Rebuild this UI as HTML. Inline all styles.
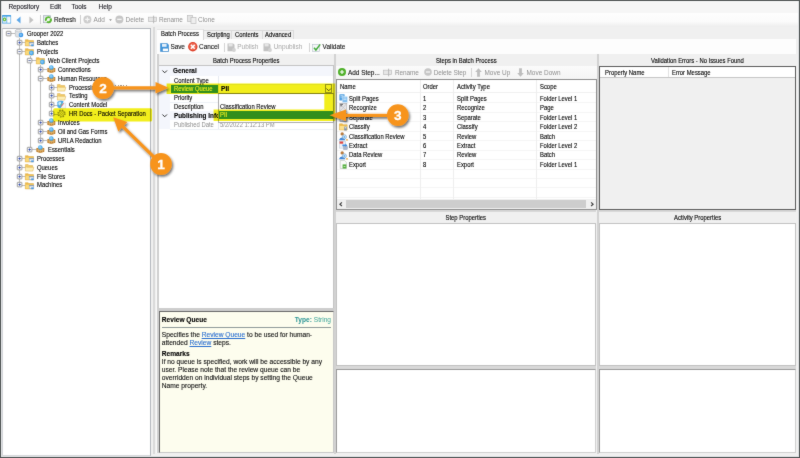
<!DOCTYPE html>
<html><head><meta charset="utf-8"><title>Grooper Design Studio</title>
<style>
html,body{margin:0;padding:0;background:#f0f0f0;}
body{width:800px;height:458px;overflow:hidden;position:relative;font-family:"Liberation Sans",sans-serif;}
#app{filter:url(#soft);position:absolute;left:0;top:0;width:800px;height:458px;overflow:hidden;background:#f0f0f0;}
.b{position:absolute;box-sizing:border-box;}
.t{position:absolute;white-space:nowrap;line-height:10px;font-family:"Liberation Sans",sans-serif;}
.k{-webkit-text-stroke:0.11px currentColor;}
svg{position:absolute;overflow:visible;}
a{color:#2a6fd0;text-decoration:underline;text-decoration-thickness:0.5px;text-underline-offset:0.5px;}
</style></head><body><svg width="0" height="0" style="position:absolute"><defs><filter id="soft" x="0" y="0" width="100%" height="100%" color-interpolation-filters="sRGB"><feConvolveMatrix order="3" kernelMatrix="0.015 0.06 0.015 0.06 0.7 0.06 0.015 0.06 0.015" edgeMode="duplicate" preserveAlpha="true"/></filter></defs></svg><div id="app">

<div class="b" style="left:0px;top:0px;width:800px;height:12.5px;background:#f6f6f6;"></div>
<div class="b" style="left:0px;top:12.5px;width:800px;height:14.5px;background:linear-gradient(#fefefe 0%,#fbfbfb 60%,#ededed 100%);"></div>
<div class="t k" style="left:8.4px;top:1.50px;font-size:6.45px;color:#1a1a22;">Repository</div>
<div class="t k" style="left:50px;top:1.50px;font-size:6.45px;color:#1a1a22;">Edit</div>
<div class="t k" style="left:71.5px;top:1.50px;font-size:6.45px;color:#1a1a22;">Tools</div>
<div class="t k" style="left:98.5px;top:1.50px;font-size:6.45px;color:#1a1a22;">Help</div>
<svg style="left:1.8px;top:14.9px" width="9.1" height="8.6" viewBox="0 0 9.1 8.6"><rect x="0" y="0" width="9.1" height="8.6" rx="0.7" fill="#439fe3"/><rect x="0.6" y="1.6" width="4" height="6.2" fill="#d3e9f9"/><rect x="5.2" y="1.6" width="3.3" height="6.2" fill="#fff"/><circle cx="2.6" cy="4.4" r="1.8" fill="#62ba30"/><path d="M1.6 4.4L3.1 3.3V5.5Z" fill="#eaf6e0"/><path d="M6 2.8H7.6M6 4.2H7.6" stroke="#c9ced4" stroke-width="0.5"/></svg>
<svg style="left:16px;top:15.6px" width="5" height="8" viewBox="0 0 5 8"><path d="M4.5 0.5L0.5 4L4.5 7.5Z" fill="#5aa6e8"/></svg>
<svg style="left:29px;top:15.5px" width="5" height="8" viewBox="0 0 5 8"><path d="M0.4 0.6L4.6 4L0.4 7.4Z" fill="#c2c2c2"/></svg>
<div class="b" style="left:40.2px;top:15px;width:0.8px;height:9px;background:#cfcfcf;"></div>
<svg style="left:43px;top:15px" width="10" height="9" viewBox="0 0 10 9"><rect x="0.4" y="0.7" width="7.2" height="7" fill="#eef1f4" stroke="#a2adb9" stroke-width="0.7"/><path d="M1.4 2.2H4" stroke="#b4bec8" stroke-width="0.6"/><circle cx="5.4" cy="4.7" r="2.5" fill="#f2f8ee" stroke="#5ab832" stroke-width="1.9" stroke-dasharray="6.6 1.25" transform="rotate(-30 5.4 4.7)"/></svg>
<div class="t k" style="left:54px;top:14.60px;font-size:6.45px;color:#151515;letter-spacing:-0.12px;">Refresh</div>
<div class="b" style="left:80.2px;top:15px;width:0.8px;height:9px;background:#cfcfcf;"></div>
<svg style="left:83px;top:15.2px" width="9" height="9" viewBox="0 0 9 9"><circle cx="4.4" cy="4.4" r="4" fill="#cdcdcd"/><path d="M2.2 4.4H6.6M4.4 2.2V6.6" stroke="#f6f6f6" stroke-width="1.2"/></svg>
<div class="t" style="left:93.5px;top:14.60px;font-size:6.45px;color:#8e8e8e;">Add</div>
<svg style="left:108.8px;top:19px" width="3" height="2.4" viewBox="0 0 3 2.4"><path d="M0.1 0.3H2.9L1.5 2Z" fill="#8a8a8a"/></svg>
<svg style="left:115px;top:15.2px" width="9" height="9" viewBox="0 0 9 9"><circle cx="4.4" cy="4.4" r="4" fill="#c6c6c6"/><path d="M2.2 4.4H6.6" stroke="#f6f6f6" stroke-width="1.4"/></svg>
<div class="t" style="left:125.5px;top:14.60px;font-size:6.45px;color:#8e8e8e;">Delete</div>
<svg style="left:148px;top:15px" width="9" height="9" viewBox="0 0 9 9"><rect x="0.5" y="2.2" width="8" height="4.4" fill="#e6e6e6" stroke="#bdbdbd" stroke-width="0.7"/><path d="M5.6 0.7V8.3" stroke="#b2b2b2" stroke-width="0.9"/></svg>
<div class="t" style="left:159px;top:14.60px;font-size:6.45px;color:#8e8e8e;letter-spacing:-0.1px;">Rename</div>
<svg style="left:187px;top:15px" width="10" height="9" viewBox="0 0 10 9"><rect x="0.5" y="0.5" width="5" height="6" fill="#e4e4e4" stroke="#bcbcbc" stroke-width="0.7"/><rect x="4" y="2.5" width="5" height="6" fill="#efefef" stroke="#bcbcbc" stroke-width="0.7"/></svg>
<div class="t" style="left:198px;top:14.60px;font-size:6.45px;color:#8e8e8e;">Clone</div>
<div class="b" style="left:1.8px;top:27.9px;width:149.3px;height:428.8px;background:#fff;border:1px solid #b4b7bd;border-left:1.2px solid #d2d4d8;border-bottom:2.6px solid #d6d8db;"></div>
<div class="b" style="left:153.1px;top:27px;width:1.9px;height:427px;background:#dadada;"></div>
<div class="b" style="left:19.099999999999998px;top:38.2px;width:0.6px;height:146.8px;background:#bdbdbd;"></div>
<div class="b" style="left:29.7px;top:56.0px;width:0.6px;height:93.4px;background:#bdbdbd;"></div>
<div class="b" style="left:40.3px;top:64.9px;width:0.6px;height:75.6px;background:#bdbdbd;"></div>
<div class="b" style="left:50.900000000000006px;top:82.7px;width:0.6px;height:31.10000000000001px;background:#bdbdbd;"></div>
<div class="b" style="left:8.8px;top:33.400000000000006px;width:6.5px;height:0.6px;background:#bdbdbd;"></div>
<svg style="left:6.200000000000001px;top:31.1px" width="5.2" height="5.2" viewBox="0 0 5.2 5.2"><rect x="0.3" y="0.3" width="4.6" height="4.6" rx="0.5" fill="#fcfcfc" stroke="#878787" stroke-width="0.8"/><path d="M1.4 2.6H3.8" stroke="#4a5a94" stroke-width="0.85"/></svg>
<svg style="left:14.700000000000001px;top:29.200000000000003px" width="10" height="10" viewBox="0 0 10 10"><path d="M0.4 1.6C0.4 0 6.4 0 6.4 1.6V6.9C6.4 8.5 0.4 8.5 0.4 6.9Z" fill="#dfe2e5" stroke="#adb2b7" stroke-width="0.55"/><ellipse cx="3.4" cy="1.7" rx="2.9" ry="1" fill="#f3f4f5" stroke="#adb2b7" stroke-width="0.45"/><circle cx="6" cy="6" r="2.3" fill="#3f98e8"/><circle cx="5.7" cy="5.7" r="1.2" fill="#7cc0f4"/></svg>
<div class="t k" style="left:26.6px;top:29.10px;font-size:6.5px;color:#000;transform:scaleX(0.905);transform-origin:left center;">Grooper 2022</div>
<div class="b" style="left:19.4px;top:42.300000000000004px;width:6.5px;height:0.6px;background:#bdbdbd;"></div>
<svg style="left:16.799999999999997px;top:40.0px" width="5.2" height="5.2" viewBox="0 0 5.2 5.2"><rect x="0.3" y="0.3" width="4.6" height="4.6" rx="0.5" fill="#fcfcfc" stroke="#878787" stroke-width="0.8"/><path d="M1.4 2.6H3.8M2.6 1.4V3.8" stroke="#2a46a8" stroke-width="0.85"/></svg>
<svg style="left:25.299999999999997px;top:38.1px" width="10" height="9" viewBox="0 0 10 9"><path d="M0.3 1.7H3.2L4 2.6H8.5V7.9H0.3Z" fill="#efbb4a" stroke="#dba63c" stroke-width="0.5"/><path d="M0.6 3.7H8.2V7.6H0.6Z" fill="#f9d97c"/><rect x="4.2" y="4.3" width="4.6" height="3.2" fill="#eef3f8" stroke="#8fa2b8" stroke-width="0.5"/><rect x="4.2" y="4.3" width="4.6" height="0.9" fill="#7d93ad"/><rect x="6.2" y="6.4" width="2.4" height="1.8" fill="#4a98e4"/></svg>
<div class="t k" style="left:37.2px;top:38.00px;font-size:6.5px;color:#000;transform:scaleX(0.905);transform-origin:left center;">Batches</div>
<div class="b" style="left:19.4px;top:51.2px;width:6.5px;height:0.6px;background:#bdbdbd;"></div>
<svg style="left:16.799999999999997px;top:48.9px" width="5.2" height="5.2" viewBox="0 0 5.2 5.2"><rect x="0.3" y="0.3" width="4.6" height="4.6" rx="0.5" fill="#fcfcfc" stroke="#878787" stroke-width="0.8"/><path d="M1.4 2.6H3.8" stroke="#4a5a94" stroke-width="0.85"/></svg>
<svg style="left:25.299999999999997px;top:47.0px" width="10" height="9" viewBox="0 0 10 9"><path d="M0.3 1.7H3.2L4 2.6H8.5V7.9H0.3Z" fill="#efbb4a" stroke="#dba63c" stroke-width="0.5"/><path d="M0.6 3.7H8.2V7.6H0.6Z" fill="#f9d97c"/><circle cx="6.4" cy="6" r="2.4" fill="#4aa6ea"/><circle cx="6.1" cy="5.7" r="1.3" fill="#7cc4f4"/></svg>
<div class="t k" style="left:37.2px;top:46.90px;font-size:6.5px;color:#000;transform:scaleX(0.905);transform-origin:left center;">Projects</div>
<div class="b" style="left:30.0px;top:60.10000000000001px;width:6.5px;height:0.6px;background:#bdbdbd;"></div>
<svg style="left:27.4px;top:57.800000000000004px" width="5.2" height="5.2" viewBox="0 0 5.2 5.2"><rect x="0.3" y="0.3" width="4.6" height="4.6" rx="0.5" fill="#fcfcfc" stroke="#878787" stroke-width="0.8"/><path d="M1.4 2.6H3.8" stroke="#4a5a94" stroke-width="0.85"/></svg>
<svg style="left:35.9px;top:55.900000000000006px" width="10" height="9" viewBox="0 0 10 9"><path d="M0.3 1.7H3.2L4 2.6H8.5V7.9H0.3Z" fill="#efbb4a" stroke="#dba63c" stroke-width="0.5"/><path d="M0.6 3.7H8.2V7.6H0.6Z" fill="#f9d97c"/><circle cx="6.4" cy="6" r="2.4" fill="#4aa6ea"/><circle cx="6.1" cy="5.7" r="1.3" fill="#7cc4f4"/></svg>
<div class="t k" style="left:47.8px;top:55.80px;font-size:6.5px;color:#000;transform:scaleX(0.905);transform-origin:left center;">Web Client Projects</div>
<div class="b" style="left:40.599999999999994px;top:69.00000000000001px;width:6.5px;height:0.6px;background:#bdbdbd;"></div>
<svg style="left:37.99999999999999px;top:66.70000000000002px" width="5.2" height="5.2" viewBox="0 0 5.2 5.2"><rect x="0.3" y="0.3" width="4.6" height="4.6" rx="0.5" fill="#fcfcfc" stroke="#878787" stroke-width="0.8"/><path d="M1.4 2.6H3.8M2.6 1.4V3.8" stroke="#2a46a8" stroke-width="0.85"/></svg>
<svg style="left:46.49999999999999px;top:64.80000000000001px" width="10" height="9" viewBox="0 0 10 9"><path d="M0.3 3.3L4.3 2.3L8.3 3.3V6.8L4.3 7.9L0.3 6.8Z" fill="#bd7c2c"/><path d="M0.3 4.7L4.3 5.8L8.3 4.7M2.3 3V7.3M6.3 3V7.3M4.3 4.6V7.9" fill="none" stroke="#ecc986" stroke-width="0.55"/><circle cx="4.3" cy="2.5" r="2.3" fill="#4faceb"/><circle cx="4.1" cy="2.2" r="1.3" fill="#8acdf6"/></svg>
<div class="t k" style="left:58.39999999999999px;top:64.70px;font-size:6.5px;color:#000;transform:scaleX(0.905);transform-origin:left center;">Connections</div>
<div class="b" style="left:40.599999999999994px;top:77.9px;width:6.5px;height:0.6px;background:#bdbdbd;"></div>
<svg style="left:37.99999999999999px;top:75.60000000000001px" width="5.2" height="5.2" viewBox="0 0 5.2 5.2"><rect x="0.3" y="0.3" width="4.6" height="4.6" rx="0.5" fill="#fcfcfc" stroke="#878787" stroke-width="0.8"/><path d="M1.4 2.6H3.8" stroke="#4a5a94" stroke-width="0.85"/></svg>
<svg style="left:46.49999999999999px;top:73.7px" width="10" height="9" viewBox="0 0 10 9"><path d="M0.3 3.3L4.3 2.3L8.3 3.3V6.8L4.3 7.9L0.3 6.8Z" fill="#bd7c2c"/><path d="M0.3 4.7L4.3 5.8L8.3 4.7M2.3 3V7.3M6.3 3V7.3M4.3 4.6V7.9" fill="none" stroke="#ecc986" stroke-width="0.55"/><circle cx="4.3" cy="2.5" r="2.3" fill="#4faceb"/><circle cx="4.1" cy="2.2" r="1.3" fill="#8acdf6"/></svg>
<div class="t k" style="left:58.39999999999999px;top:73.60px;font-size:6.5px;color:#000;transform:scaleX(0.905);transform-origin:left center;">Human Resources</div>
<div class="b" style="left:51.2px;top:86.80000000000001px;width:6.5px;height:0.6px;background:#bdbdbd;"></div>
<svg style="left:48.6px;top:84.50000000000001px" width="5.2" height="5.2" viewBox="0 0 5.2 5.2"><rect x="0.3" y="0.3" width="4.6" height="4.6" rx="0.5" fill="#fcfcfc" stroke="#878787" stroke-width="0.8"/><path d="M1.4 2.6H3.8M2.6 1.4V3.8" stroke="#2a46a8" stroke-width="0.85"/></svg>
<svg style="left:57.1px;top:82.60000000000001px" width="10" height="9" viewBox="0 0 10 9"><path d="M0.4 1.6H3.2L4 2.5H7.7V4.4H0.4Z" fill="#f3cd6a" stroke="#d8aa48" stroke-width="0.5"/><path d="M0.4 8.1V3.6H1L1.8 4.3H8.8L7.8 8.1Z" fill="#fdeeb4" stroke="#dcae4c" stroke-width="0.5"/></svg>
<div class="t k" style="left:69.0px;top:82.50px;font-size:6.5px;color:#000;transform:scaleX(0.905);transform-origin:left center;">Processing</div>
<div class="b" style="left:51.2px;top:95.7px;width:6.5px;height:0.6px;background:#bdbdbd;"></div>
<svg style="left:48.6px;top:93.4px" width="5.2" height="5.2" viewBox="0 0 5.2 5.2"><rect x="0.3" y="0.3" width="4.6" height="4.6" rx="0.5" fill="#fcfcfc" stroke="#878787" stroke-width="0.8"/><path d="M1.4 2.6H3.8M2.6 1.4V3.8" stroke="#2a46a8" stroke-width="0.85"/></svg>
<svg style="left:57.1px;top:91.5px" width="10" height="9" viewBox="0 0 10 9"><path d="M0.4 1.6H3.2L4 2.5H7.7V4.4H0.4Z" fill="#f3cd6a" stroke="#d8aa48" stroke-width="0.5"/><path d="M0.4 8.1V3.6H1L1.8 4.3H8.8L7.8 8.1Z" fill="#fdeeb4" stroke="#dcae4c" stroke-width="0.5"/></svg>
<div class="t k" style="left:69.0px;top:91.40px;font-size:6.5px;color:#000;transform:scaleX(0.905);transform-origin:left center;">Testing</div>
<div class="b" style="left:51.2px;top:104.60000000000001px;width:6.5px;height:0.6px;background:#bdbdbd;"></div>
<svg style="left:48.6px;top:102.30000000000001px" width="5.2" height="5.2" viewBox="0 0 5.2 5.2"><rect x="0.3" y="0.3" width="4.6" height="4.6" rx="0.5" fill="#fcfcfc" stroke="#878787" stroke-width="0.8"/><path d="M1.4 2.6H3.8M2.6 1.4V3.8" stroke="#2a46a8" stroke-width="0.85"/></svg>
<svg style="left:57.1px;top:100.4px" width="10" height="10" viewBox="0 0 10 10"><path d="M4 3H8.6V8.2H4Z" fill="#f4f5f7" stroke="#c5cad0" stroke-width="0.4"/><path d="M0.4 2.2C0.4 0.6 5.8 0.2 6.6 1.4L3.6 8.2C1.6 8.4 0.4 7.4 0.4 6Z" fill="#4aa8e8"/><ellipse cx="2.8" cy="3.6" rx="1.5" ry="2" fill="#c4e6fb"/><path d="M4.2 6.6L6.6 3.4" stroke="#d9534f" stroke-width="0.9"/><path d="M3.2 5.4L4.8 3.4" stroke="#5cb85c" stroke-width="0.9"/></svg>
<div class="t k" style="left:69.0px;top:100.30px;font-size:6.5px;color:#000;transform:scaleX(0.905);transform-origin:left center;">Content Model</div>
<div class="b" style="left:51.2px;top:113.50000000000001px;width:6.5px;height:0.6px;background:#bdbdbd;"></div>
<svg style="left:48.6px;top:111.20000000000002px" width="5.2" height="5.2" viewBox="0 0 5.2 5.2"><rect x="0.3" y="0.3" width="4.6" height="4.6" rx="0.5" fill="#fcfcfc" stroke="#878787" stroke-width="0.8"/><path d="M1.4 2.6H3.8M2.6 1.4V3.8" stroke="#2a46a8" stroke-width="0.85"/></svg>
<svg style="left:57.1px;top:109.30000000000001px" width="10" height="10" viewBox="0 0 10 10"><circle cx="4.5" cy="4.6" r="3.5" fill="none" stroke="#8f8f50" stroke-width="1.3" stroke-dasharray="1.45 1.3"/><circle cx="4.5" cy="4.6" r="2.7" fill="#fbfbf2" stroke="#8a8a4a" stroke-width="0.7"/><circle cx="4.5" cy="4.6" r="1" fill="none" stroke="#8a8a4a" stroke-width="0.6"/></svg>
<div class="t k" style="left:69.0px;top:109.20px;font-size:6.5px;color:#000;transform:scaleX(0.905);transform-origin:left center;">HR Docs - Packet Separation</div>
<div class="b" style="left:40.599999999999994px;top:122.4px;width:6.5px;height:0.6px;background:#bdbdbd;"></div>
<svg style="left:37.99999999999999px;top:120.10000000000001px" width="5.2" height="5.2" viewBox="0 0 5.2 5.2"><rect x="0.3" y="0.3" width="4.6" height="4.6" rx="0.5" fill="#fcfcfc" stroke="#878787" stroke-width="0.8"/><path d="M1.4 2.6H3.8M2.6 1.4V3.8" stroke="#2a46a8" stroke-width="0.85"/></svg>
<svg style="left:46.49999999999999px;top:118.2px" width="10" height="9" viewBox="0 0 10 9"><path d="M0.3 3.3L4.3 2.3L8.3 3.3V6.8L4.3 7.9L0.3 6.8Z" fill="#bd7c2c"/><path d="M0.3 4.7L4.3 5.8L8.3 4.7M2.3 3V7.3M6.3 3V7.3M4.3 4.6V7.9" fill="none" stroke="#ecc986" stroke-width="0.55"/><circle cx="4.3" cy="2.5" r="2.3" fill="#4faceb"/><circle cx="4.1" cy="2.2" r="1.3" fill="#8acdf6"/></svg>
<div class="t k" style="left:58.39999999999999px;top:118.10px;font-size:6.5px;color:#000;transform:scaleX(0.905);transform-origin:left center;">Invoices</div>
<div class="b" style="left:40.599999999999994px;top:131.3px;width:6.5px;height:0.6px;background:#bdbdbd;"></div>
<svg style="left:37.99999999999999px;top:129.00000000000003px" width="5.2" height="5.2" viewBox="0 0 5.2 5.2"><rect x="0.3" y="0.3" width="4.6" height="4.6" rx="0.5" fill="#fcfcfc" stroke="#878787" stroke-width="0.8"/><path d="M1.4 2.6H3.8M2.6 1.4V3.8" stroke="#2a46a8" stroke-width="0.85"/></svg>
<svg style="left:46.49999999999999px;top:127.10000000000002px" width="10" height="9" viewBox="0 0 10 9"><path d="M0.3 3.3L4.3 2.3L8.3 3.3V6.8L4.3 7.9L0.3 6.8Z" fill="#bd7c2c"/><path d="M0.3 4.7L4.3 5.8L8.3 4.7M2.3 3V7.3M6.3 3V7.3M4.3 4.6V7.9" fill="none" stroke="#ecc986" stroke-width="0.55"/><circle cx="4.3" cy="2.5" r="2.3" fill="#4faceb"/><circle cx="4.1" cy="2.2" r="1.3" fill="#8acdf6"/></svg>
<div class="t k" style="left:58.39999999999999px;top:127.00px;font-size:6.5px;color:#000;transform:scaleX(0.905);transform-origin:left center;">Oil and Gas Forms</div>
<div class="b" style="left:40.599999999999994px;top:140.2px;width:6.5px;height:0.6px;background:#bdbdbd;"></div>
<svg style="left:37.99999999999999px;top:137.9px" width="5.2" height="5.2" viewBox="0 0 5.2 5.2"><rect x="0.3" y="0.3" width="4.6" height="4.6" rx="0.5" fill="#fcfcfc" stroke="#878787" stroke-width="0.8"/><path d="M1.4 2.6H3.8M2.6 1.4V3.8" stroke="#2a46a8" stroke-width="0.85"/></svg>
<svg style="left:46.49999999999999px;top:136.0px" width="10" height="9" viewBox="0 0 10 9"><path d="M0.3 3.3L4.3 2.3L8.3 3.3V6.8L4.3 7.9L0.3 6.8Z" fill="#bd7c2c"/><path d="M0.3 4.7L4.3 5.8L8.3 4.7M2.3 3V7.3M6.3 3V7.3M4.3 4.6V7.9" fill="none" stroke="#ecc986" stroke-width="0.55"/><circle cx="4.3" cy="2.5" r="2.3" fill="#4faceb"/><circle cx="4.1" cy="2.2" r="1.3" fill="#8acdf6"/></svg>
<div class="t k" style="left:58.39999999999999px;top:135.90px;font-size:6.5px;color:#000;transform:scaleX(0.905);transform-origin:left center;">URLA Redaction</div>
<div class="b" style="left:30.0px;top:149.1px;width:6.5px;height:0.6px;background:#bdbdbd;"></div>
<svg style="left:27.4px;top:146.8px" width="5.2" height="5.2" viewBox="0 0 5.2 5.2"><rect x="0.3" y="0.3" width="4.6" height="4.6" rx="0.5" fill="#fcfcfc" stroke="#878787" stroke-width="0.8"/><path d="M1.4 2.6H3.8M2.6 1.4V3.8" stroke="#2a46a8" stroke-width="0.85"/></svg>
<svg style="left:35.9px;top:144.9px" width="10" height="9" viewBox="0 0 10 9"><path d="M0.3 3.3L4.3 2.3L8.3 3.3V6.8L4.3 7.9L0.3 6.8Z" fill="#bd7c2c"/><path d="M0.3 4.7L4.3 5.8L8.3 4.7M2.3 3V7.3M6.3 3V7.3M4.3 4.6V7.9" fill="none" stroke="#ecc986" stroke-width="0.55"/><circle cx="4.3" cy="2.5" r="2.3" fill="#4faceb"/><circle cx="4.1" cy="2.2" r="1.3" fill="#8acdf6"/></svg>
<div class="t k" style="left:47.8px;top:144.80px;font-size:6.5px;color:#000;transform:scaleX(0.905);transform-origin:left center;">Essentials</div>
<div class="b" style="left:19.4px;top:158.0px;width:6.5px;height:0.6px;background:#bdbdbd;"></div>
<svg style="left:16.799999999999997px;top:155.70000000000002px" width="5.2" height="5.2" viewBox="0 0 5.2 5.2"><rect x="0.3" y="0.3" width="4.6" height="4.6" rx="0.5" fill="#fcfcfc" stroke="#878787" stroke-width="0.8"/><path d="M1.4 2.6H3.8M2.6 1.4V3.8" stroke="#2a46a8" stroke-width="0.85"/></svg>
<svg style="left:25.299999999999997px;top:153.8px" width="10" height="9" viewBox="0 0 10 9"><path d="M0.3 1.7H3.2L4 2.6H8.5V7.9H0.3Z" fill="#efbb4a" stroke="#dba63c" stroke-width="0.5"/><path d="M0.6 3.7H8.2V7.6H0.6Z" fill="#f9d97c"/><rect x="4.2" y="4.3" width="4.6" height="3.2" fill="#eef3f8" stroke="#8fa2b8" stroke-width="0.5"/><rect x="4.2" y="4.3" width="4.6" height="0.9" fill="#7d93ad"/><rect x="6.2" y="6.4" width="2.4" height="1.8" fill="#4a98e4"/></svg>
<div class="t k" style="left:37.2px;top:153.70px;font-size:6.5px;color:#000;transform:scaleX(0.905);transform-origin:left center;">Processes</div>
<div class="b" style="left:19.4px;top:166.89999999999998px;width:6.5px;height:0.6px;background:#bdbdbd;"></div>
<svg style="left:16.799999999999997px;top:164.6px" width="5.2" height="5.2" viewBox="0 0 5.2 5.2"><rect x="0.3" y="0.3" width="4.6" height="4.6" rx="0.5" fill="#fcfcfc" stroke="#878787" stroke-width="0.8"/><path d="M1.4 2.6H3.8M2.6 1.4V3.8" stroke="#2a46a8" stroke-width="0.85"/></svg>
<svg style="left:25.299999999999997px;top:162.7px" width="10" height="9" viewBox="0 0 10 9"><path d="M0.4 1.6H3.2L4 2.5H7.7V4.4H0.4Z" fill="#f3cd6a" stroke="#d8aa48" stroke-width="0.5"/><path d="M0.4 8.1V3.6H1L1.8 4.3H8.8L7.8 8.1Z" fill="#fdeeb4" stroke="#dcae4c" stroke-width="0.5"/></svg>
<div class="t k" style="left:37.2px;top:162.60px;font-size:6.5px;color:#000;transform:scaleX(0.905);transform-origin:left center;">Queues</div>
<div class="b" style="left:19.4px;top:175.8px;width:6.5px;height:0.6px;background:#bdbdbd;"></div>
<svg style="left:16.799999999999997px;top:173.50000000000003px" width="5.2" height="5.2" viewBox="0 0 5.2 5.2"><rect x="0.3" y="0.3" width="4.6" height="4.6" rx="0.5" fill="#fcfcfc" stroke="#878787" stroke-width="0.8"/><path d="M1.4 2.6H3.8M2.6 1.4V3.8" stroke="#2a46a8" stroke-width="0.85"/></svg>
<svg style="left:25.299999999999997px;top:171.60000000000002px" width="10" height="9" viewBox="0 0 10 9"><path d="M0.3 1.7H3.2L4 2.6H8.5V7.9H0.3Z" fill="#efbb4a" stroke="#dba63c" stroke-width="0.5"/><path d="M0.6 3.7H8.2V7.6H0.6Z" fill="#f9d97c"/><rect x="4.2" y="4.3" width="4.6" height="3.2" fill="#eef3f8" stroke="#8fa2b8" stroke-width="0.5"/><rect x="4.2" y="4.3" width="4.6" height="0.9" fill="#7d93ad"/><rect x="6.2" y="6.4" width="2.4" height="1.8" fill="#4a98e4"/></svg>
<div class="t k" style="left:37.2px;top:171.50px;font-size:6.5px;color:#000;transform:scaleX(0.905);transform-origin:left center;">File Stores</div>
<div class="b" style="left:19.4px;top:184.7px;width:6.5px;height:0.6px;background:#bdbdbd;"></div>
<svg style="left:16.799999999999997px;top:182.4px" width="5.2" height="5.2" viewBox="0 0 5.2 5.2"><rect x="0.3" y="0.3" width="4.6" height="4.6" rx="0.5" fill="#fcfcfc" stroke="#878787" stroke-width="0.8"/><path d="M1.4 2.6H3.8M2.6 1.4V3.8" stroke="#2a46a8" stroke-width="0.85"/></svg>
<svg style="left:25.299999999999997px;top:180.5px" width="10" height="9" viewBox="0 0 10 9"><path d="M0.3 1.7H3.2L4 2.6H8.5V7.9H0.3Z" fill="#efbb4a" stroke="#dba63c" stroke-width="0.5"/><path d="M0.6 3.7H8.2V7.6H0.6Z" fill="#f9d97c"/><rect x="4.2" y="4.3" width="4.6" height="3.2" fill="#eef3f8" stroke="#8fa2b8" stroke-width="0.5"/><rect x="4.2" y="4.3" width="4.6" height="0.9" fill="#7d93ad"/><rect x="6.2" y="6.4" width="2.4" height="1.8" fill="#4a98e4"/></svg>
<div class="t k" style="left:37.2px;top:180.40px;font-size:6.5px;color:#000;transform:scaleX(0.905);transform-origin:left center;">Machines</div>
<div class="b" style="left:156.8px;top:39.3px;width:639px;height:15px;background:#fdfdfd;"></div>
<div class="b" style="left:156.8px;top:28.8px;width:47.2px;height:11.5px;background:#fdfdfd;border:1px solid #e4e4e4;border-bottom:none;border-left:none;border-right-color:#d8d8d8;"></div>
<div class="t k" style="left:161.3px;top:29.20px;font-size:6.5px;color:#000;transform:scaleX(0.905);transform-origin:left center;">Batch Process</div>
<div class="b" style="left:204.0px;top:30.2px;width:28.0px;height:9.3px;background:#f0f0f0;border:1px solid #dadada;border-left:none;border-bottom:none;"></div>
<div class="t k" style="left:206.5px;top:29.80px;font-size:6.5px;color:#000;transform:scaleX(0.905);transform-origin:left center;">Scripting</div>
<div class="b" style="left:232.0px;top:30.2px;width:30.5px;height:9.3px;background:#f0f0f0;border:1px solid #dadada;border-left:none;border-bottom:none;"></div>
<div class="t k" style="left:235.3px;top:29.80px;font-size:6.5px;color:#000;transform:scaleX(0.905);transform-origin:left center;">Contents</div>
<div class="b" style="left:262.5px;top:30.2px;width:31.600000000000023px;height:9.3px;background:#f0f0f0;border:1px solid #dadada;border-left:none;border-bottom:none;"></div>
<div class="t k" style="left:265.2px;top:29.80px;font-size:6.5px;color:#000;transform:scaleX(0.905);transform-origin:left center;">Advanced</div>
<svg style="left:160px;top:42.7px" width="9" height="9" viewBox="0 0 9 9"><path d="M0.5 0.5H7.2L8.5 1.8V8.5H0.5Z" fill="#3f95dc" stroke="#2f7fc6" stroke-width="0.5"/><rect x="2" y="0.9" width="4.6" height="2.9" fill="#e4effa"/><rect x="2.6" y="5.2" width="5.6" height="3.1" fill="#fff" stroke="#2f7fc6" stroke-width="0.4"/></svg>
<div class="t k" style="left:170.6px;top:42.20px;font-size:6.45px;color:#151515;letter-spacing:-0.15px;">Save</div>
<svg style="left:187.8px;top:42.3px" width="9.6" height="9.6" viewBox="0 0 9.6 9.6"><circle cx="4.8" cy="4.8" r="4.7" fill="#de3f28"/><circle cx="4.8" cy="4.6" r="3.6" fill="#ec6650"/><path d="M2.9 2.9L6.7 6.7M6.7 2.9L2.9 6.7" stroke="#fff" stroke-width="1.5"/></svg>
<div class="t k" style="left:199px;top:42.20px;font-size:6.45px;color:#151515;">Cancel</div>
<div class="b" style="left:224.3px;top:42.6px;width:0.8px;height:9px;background:#d4d4d4;"></div>
<svg style="left:226.5px;top:42.7px" width="9" height="9" viewBox="0 0 9 9"><path d="M0.5 0.5H6.2L7.5 1.8V8.3H0.5Z" fill="#c2c2c2"/><rect x="1.6" y="0.9" width="4" height="2.5" fill="#e6e6e6"/><circle cx="7" cy="7" r="1.9" fill="#d2d2d2"/></svg>
<div class="t" style="left:237.3px;top:42.20px;font-size:6.45px;color:#a6a6a6;">Publish</div>
<svg style="left:263.3px;top:42.7px" width="9" height="9" viewBox="0 0 9 9"><path d="M0.5 0.5H6.2L7.5 1.8V8.3H0.5Z" fill="#c2c2c2"/><rect x="1.6" y="0.9" width="4" height="2.5" fill="#e6e6e6"/><circle cx="7" cy="7" r="1.9" fill="#d2d2d2"/></svg>
<div class="t" style="left:273.7px;top:42.20px;font-size:6.45px;color:#a6a6a6;">Unpublish</div>
<div class="b" style="left:308.6px;top:42.6px;width:0.8px;height:9px;background:#d4d4d4;"></div>
<svg style="left:312px;top:42.7px" width="10" height="9" viewBox="0 0 10 9"><rect x="0.5" y="1.6" width="6.8" height="6.8" fill="#f4f6f8" stroke="#b4bec8" stroke-width="0.6"/><path d="M2 4.8L3.9 7L8.2 1.4" fill="none" stroke="#45ab3c" stroke-width="1.5"/></svg>
<div class="t k" style="left:322.6px;top:42.20px;font-size:6.45px;color:#151515;">Validate</div>
<div class="b" style="left:333.8px;top:54px;width:2.1px;height:400px;background:#d2d2d2;"></div>
<div class="b" style="left:596.6px;top:54px;width:2.1px;height:400px;background:#d2d2d2;"></div>
<div class="b" style="left:157.4px;top:54.1px;width:1.9px;height:399px;background:#d0d0d0;"></div>
<div class="b" style="left:156.4px;top:54.1px;width:1px;height:399px;background:#fafafa;"></div>
<div class="t k" style="left:159.3px;top:55.80px;font-size:6.5px;color:#000;width:174.5px;text-align:center;transform:scaleX(0.905);transform-origin:center center;">Batch Process Properties</div>
<div class="b" style="left:159.3px;top:65.4px;width:174.5px;height:242.6px;background:#fff;border:0.7px solid #c4c4c4;border-left:none;border-bottom:none;"></div>
<div class="b" style="left:159.3px;top:66.1px;width:173.8px;height:9.550000000000011px;background:#f4f6fc;"></div>
<div class="b" style="left:159.3px;top:111.25px;width:173.8px;height:8.9px;background:#f4f6fc;"></div>
<div class="b" style="left:159.3px;top:75.65px;width:11px;height:35.6px;background:#f4f6fc;"></div>
<div class="b" style="left:159.3px;top:120.15px;width:11px;height:8.9px;background:#f4f6fc;"></div>
<div class="b" style="left:170.3px;top:84.25000000000001px;width:162.8px;height:0.6px;background:#eef1f7;"></div>
<div class="b" style="left:170.3px;top:93.15px;width:162.8px;height:0.6px;background:#eef1f7;"></div>
<div class="b" style="left:170.3px;top:102.05000000000001px;width:162.8px;height:0.6px;background:#eef1f7;"></div>
<div class="b" style="left:170.3px;top:128.75px;width:162.8px;height:0.6px;background:#eef1f7;"></div>
<div class="b" style="left:217.5px;top:75.65px;width:0.6px;height:35.6px;background:#e6eaf2;"></div>
<div class="b" style="left:217.5px;top:120.15px;width:0.6px;height:8.9px;background:#e6eaf2;"></div>
<svg style="left:162.4px;top:69.7px" width="5.4" height="3.4" viewBox="0 0 5.4 3.4"><path d="M0.4 0.5L2.7 2.8L5 0.5" fill="none" stroke="#2c2c2c" stroke-width="1.0"/></svg>
<svg style="left:162.4px;top:114.2px" width="5.4" height="3.4" viewBox="0 0 5.4 3.4"><path d="M0.4 0.5L2.7 2.8L5 0.5" fill="none" stroke="#2c2c2c" stroke-width="1.0"/></svg>
<div class="t k" style="left:173.4px;top:66.20px;font-size:6.7px;color:#000;font-weight:bold;transform:scaleX(0.95);transform-origin:left center;">General</div>
<div class="t k" style="left:173.5px;top:75.50px;font-size:6.5px;color:#000;transform:scaleX(0.905);transform-origin:left center;">Content Type</div>
<div class="b" style="left:170.9px;top:84.9px;width:47px;height:7.8px;background:#3399ff;"></div>
<div class="t k" style="left:173.8px;top:84.40px;font-size:6.5px;color:#fff;transform:scaleX(0.905);transform-origin:left center;">Review Queue</div>
<div class="t k" style="left:173.6px;top:93.30px;font-size:6.5px;color:#000;transform:scaleX(0.905);transform-origin:left center;">Priority</div>
<div class="t k" style="left:173.6px;top:102.20px;font-size:6.5px;color:#000;transform:scaleX(0.905);transform-origin:left center;">Description</div>
<div class="t k" style="left:174px;top:110.70px;font-size:6.7px;color:#000;font-weight:bold;transform:scaleX(0.95);transform-origin:left center;">Publishing Info</div>
<div class="t" style="left:173.6px;top:120.00px;font-size:6.5px;color:#8a8a8a;transform:scaleX(0.905);transform-origin:left center;">Published Date</div>
<div class="t" style="left:220px;top:120.30px;font-size:6.5px;color:#8e8e8e;transform:scaleX(0.905);transform-origin:left center;">5/2/2022 1:12:13 PM</div>
<div class="t k" style="left:221px;top:83.70px;font-size:6.6px;color:#000;font-weight:bold;">PII</div>
<div class="b" style="left:324.8px;top:84.3px;width:7.7px;height:8.5px;background:#fff;border:0.6px solid #9c9c9c;"></div>
<svg style="left:326px;top:88.1px" width="5.4" height="3.4" viewBox="0 0 5.4 3.4"><path d="M0.4 0.5L2.7 2.8L5 0.5" fill="none" stroke="#444" stroke-width="0.9"/></svg>
<div class="b" style="left:218px;top:93.2px;width:115.8px;height:30.2px;background:#fff;border:0.7px solid #acacac;border-top-color:#8a8a8a;border-right-color:#9a9a9a;"></div>
<div class="t k" style="left:219.5px;top:102.00px;font-size:6.5px;color:#000;transform:scaleX(0.905);transform-origin:left center;">Classification Review</div>
<div class="b" style="left:218.6px;top:110.7px;width:114.6px;height:8.4px;background:#3399ff;"></div>
<div class="t k" style="left:220px;top:110.30px;font-size:6.5px;color:#fff;transform:scaleX(0.905);transform-origin:left center;">PII</div>
<div class="b" style="left:159.3px;top:308px;width:174.5px;height:3.2px;background:#cdcdcd;"></div>
<div class="b" style="left:159px;top:311.1px;width:174.6px;height:141.6px;background:#fdfdee;border:0.8px solid #6a6a6a;border-right-color:#c8c8c8;border-bottom-color:#c8c8c8;"></div>
<div class="t k" style="left:161.8px;top:314.90px;font-size:6.6px;color:#000;font-weight:bold;">Review Queue</div>
<div class="t" style="left:231px;top:314.9px;width:100px;text-align:right;font-size:6.6px;"><b style="color:#2a9494">Type:</b> <span style="color:#3aa398">String</span></div>
<div class="b" style="left:161.5px;top:327.1px;width:169.8px;height:0.7px;background:#8f9a9a;"></div>
<div class="t k" style="left:161.8px;top:330.10px;font-size:6.65px;color:#111;">Specifies the <a>Review Queue</a> to be used for human-</div>
<div class="t k" style="left:161.8px;top:338.00px;font-size:6.65px;color:#111;">attended <a>Review</a> steps.</div>
<div class="t k" style="left:161.8px;top:348.50px;font-size:6.6px;color:#000;font-weight:bold;">Remarks</div>
<div class="t k" style="left:161.8px;top:357.40px;font-size:6.65px;color:#111;">If no queue is specified, work will be accessible by any</div>
<div class="t k" style="left:161.8px;top:365.18px;font-size:6.65px;color:#111;">user. Please note that the review queue can be</div>
<div class="t k" style="left:161.8px;top:372.96px;font-size:6.65px;color:#111;">overridden on individual steps by setting the Queue</div>
<div class="t k" style="left:161.8px;top:380.74px;font-size:6.65px;color:#111;">Name property.</div>
<div class="t k" style="left:336px;top:55.80px;font-size:6.5px;color:#000;width:260.6px;text-align:center;transform:scaleX(0.905);transform-origin:center center;">Steps in Batch Process</div>
<div class="b" style="left:336px;top:65.7px;width:260.6px;height:13.6px;background:linear-gradient(#fbfbfb,#f4f4f4);"></div>
<svg style="left:337.6px;top:68.1px" width="8" height="8" viewBox="0 0 8 8"><circle cx="4" cy="4" r="4" fill="#4fb02a"/><path d="M1.9 4H6.1M4 1.9V6.1" stroke="#fff" stroke-width="1.15"/></svg>
<div class="t k" style="left:347.9px;top:67.50px;font-size:6.45px;color:#151515;">Add Step...</div>
<svg style="left:383.4px;top:68px" width="9" height="9" viewBox="0 0 9 9"><rect x="0.5" y="2.2" width="8" height="4.4" fill="#e6e6e6" stroke="#bdbdbd" stroke-width="0.7"/><path d="M5.6 0.7V8.3" stroke="#b2b2b2" stroke-width="0.9"/></svg>
<div class="t" style="left:395px;top:67.50px;font-size:6.45px;color:#8e8e8e;letter-spacing:-0.1px;">Rename</div>
<svg style="left:423.5px;top:68.3px" width="8" height="8" viewBox="0 0 8 8"><circle cx="4" cy="4" r="3.8" fill="#c6c6c6"/><path d="M2 4H6" stroke="#f6f6f6" stroke-width="1.3"/></svg>
<div class="t" style="left:433.7px;top:67.50px;font-size:6.45px;color:#8e8e8e;letter-spacing:-0.1px;">Delete Step</div>
<div class="b" style="left:471px;top:68px;width:0.8px;height:9px;background:#d4d4d4;"></div>
<svg style="left:474.5px;top:68px" width="7" height="9" viewBox="0 0 7 9"><path d="M3.5 0.3L6.8 4H4.9V8.7H2.1V4H0.2Z" fill="#bdbdbd"/></svg>
<div class="t" style="left:484.5px;top:67.50px;font-size:6.45px;color:#8e8e8e;">Move Up</div>
<svg style="left:516.5px;top:68px" width="7" height="9" viewBox="0 0 7 9"><path d="M3.5 8.7L6.8 5H4.9V0.3H2.1V5H0.2Z" fill="#bdbdbd"/></svg>
<div class="t" style="left:526.5px;top:67.50px;font-size:6.45px;color:#8e8e8e;">Move Down</div>
<div class="b" style="left:336px;top:79.3px;width:260.5px;height:130.3px;background:#fff;border:0.8px solid #8e8e8e;"></div>
<div class="b" style="left:336.8px;top:91.9px;width:258.9px;height:0.6px;background:#f0f0f0;"></div>
<div class="b" style="left:336.8px;top:102.4px;width:258.9px;height:0.6px;background:#f5f5f5;"></div>
<div class="b" style="left:336.8px;top:111.85000000000001px;width:258.9px;height:0.6px;background:#f5f5f5;"></div>
<div class="b" style="left:336.8px;top:121.30000000000001px;width:258.9px;height:0.6px;background:#f5f5f5;"></div>
<div class="b" style="left:336.8px;top:130.75px;width:258.9px;height:0.6px;background:#f5f5f5;"></div>
<div class="b" style="left:336.8px;top:140.2px;width:258.9px;height:0.6px;background:#f5f5f5;"></div>
<div class="b" style="left:336.8px;top:149.65px;width:258.9px;height:0.6px;background:#f5f5f5;"></div>
<div class="b" style="left:336.8px;top:159.1px;width:258.9px;height:0.6px;background:#f5f5f5;"></div>
<div class="b" style="left:336.8px;top:168.55px;width:258.9px;height:0.6px;background:#f5f5f5;"></div>
<div class="b" style="left:336.8px;top:178.0px;width:258.9px;height:0.6px;background:#f5f5f5;"></div>
<div class="b" style="left:336.8px;top:187.45px;width:258.9px;height:0.6px;background:#f5f5f5;"></div>
<div class="b" style="left:336.8px;top:196.9px;width:258.9px;height:0.6px;background:#f5f5f5;"></div>
<div class="b" style="left:420.2px;top:80.1px;width:0.6px;height:119px;background:#eeeeee;"></div>
<div class="b" style="left:453.3px;top:80.1px;width:0.6px;height:119px;background:#eeeeee;"></div>
<div class="b" style="left:536.4px;top:80.1px;width:0.6px;height:119px;background:#eeeeee;"></div>
<div class="t k" style="left:340.2px;top:81.80px;font-size:6.5px;color:#000;transform:scaleX(0.905);transform-origin:left center;">Name</div>
<div class="t k" style="left:423.3px;top:81.80px;font-size:6.5px;color:#000;transform:scaleX(0.905);transform-origin:left center;">Order</div>
<div class="t k" style="left:456.5px;top:81.80px;font-size:6.5px;color:#000;transform:scaleX(0.905);transform-origin:left center;">Activity Type</div>
<div class="t k" style="left:540px;top:81.80px;font-size:6.5px;color:#000;transform:scaleX(0.905);transform-origin:left center;">Scope</div>
<svg style="left:339.3px;top:93.8px" width="9" height="9" viewBox="0 0 9 9"><rect x="0.4" y="0.3" width="5.2" height="6.2" rx="0.5" fill="#4f9fe0"/><path d="M1.4 1.6H4.4M1.4 3H4.4" stroke="#cfe6fa" stroke-width="0.7"/><rect x="3.3" y="2.4" width="5.2" height="6.2" rx="0.5" fill="#7fbdee" stroke="#e8f3fc" stroke-width="0.5"/><path d="M4.4 4H7.4M4.4 5.6H7.4" stroke="#e4f1fc" stroke-width="0.7"/></svg>
<div class="t k" style="left:349px;top:93.70px;font-size:6.5px;color:#000;transform:scaleX(0.905);transform-origin:left center;">Split Pages</div>
<div class="t k" style="left:423.3px;top:93.70px;font-size:6.5px;color:#000;transform:scaleX(0.905);transform-origin:left center;">1</div>
<div class="t k" style="left:456.5px;top:93.70px;font-size:6.5px;color:#000;transform:scaleX(0.905);transform-origin:left center;">Split Pages</div>
<div class="t k" style="left:540px;top:93.70px;font-size:6.5px;color:#000;transform:scaleX(0.905);transform-origin:left center;">Folder Level 1</div>
<svg style="left:339.3px;top:103.25999999999999px" width="9" height="9" viewBox="0 0 9 9"><rect x="0.8" y="0.4" width="7" height="8" fill="#e6e6e8" stroke="#a4a4a8" stroke-width="0.6"/><path d="M0.8 0.4L7.8 8.4M7.8 0.4L0.8 8.4" stroke="#bcbcc0" stroke-width="0.6"/><path d="M1.2 1.4H4M1.2 2.8H3" stroke="#4a4a4e" stroke-width="0.8"/></svg>
<div class="t k" style="left:349px;top:103.16px;font-size:6.5px;color:#000;transform:scaleX(0.905);transform-origin:left center;">Recognize</div>
<div class="t k" style="left:423.3px;top:103.16px;font-size:6.5px;color:#000;transform:scaleX(0.905);transform-origin:left center;">2</div>
<div class="t k" style="left:456.5px;top:103.16px;font-size:6.5px;color:#000;transform:scaleX(0.905);transform-origin:left center;">Recognize</div>
<div class="t k" style="left:540px;top:103.16px;font-size:6.5px;color:#000;transform:scaleX(0.905);transform-origin:left center;">Page</div>
<svg style="left:339.3px;top:112.72px" width="9" height="9" viewBox="0 0 9 9"><rect x="1" y="0.5" width="7" height="8" fill="#eef2f6" stroke="#8e9aa8" stroke-width="0.7"/><path d="M0 4.5H9" stroke="#e08a2a" stroke-width="0.9"/></svg>
<div class="t k" style="left:349px;top:112.62px;font-size:6.5px;color:#000;transform:scaleX(0.905);transform-origin:left center;">Separate</div>
<div class="t k" style="left:423.3px;top:112.62px;font-size:6.5px;color:#000;transform:scaleX(0.905);transform-origin:left center;">3</div>
<div class="t k" style="left:456.5px;top:112.62px;font-size:6.5px;color:#000;transform:scaleX(0.905);transform-origin:left center;">Separate</div>
<div class="t k" style="left:540px;top:112.62px;font-size:6.5px;color:#000;transform:scaleX(0.905);transform-origin:left center;">Folder Level 1</div>
<svg style="left:339.3px;top:122.18px" width="9" height="9" viewBox="0 0 9 9"><path d="M0.4 1.8H3.4L4.2 2.7H8.2V8H0.4Z" fill="#efbb4a" stroke="#dba63c" stroke-width="0.5"/><path d="M0.7 3.9H7.9V7.7H0.7Z" fill="#fbe08e"/><rect x="5.2" y="4.6" width="2.6" height="3.9" fill="#7d8ea4"/><rect x="5.7" y="5.2" width="1.6" height="1.2" fill="#dfe6ee"/></svg>
<div class="t k" style="left:349px;top:122.08px;font-size:6.5px;color:#000;transform:scaleX(0.905);transform-origin:left center;">Classify</div>
<div class="t k" style="left:423.3px;top:122.08px;font-size:6.5px;color:#000;transform:scaleX(0.905);transform-origin:left center;">4</div>
<div class="t k" style="left:456.5px;top:122.08px;font-size:6.5px;color:#000;transform:scaleX(0.905);transform-origin:left center;">Classify</div>
<div class="t k" style="left:540px;top:122.08px;font-size:6.5px;color:#000;transform:scaleX(0.905);transform-origin:left center;">Folder Level 2</div>
<svg style="left:339.3px;top:131.64px" width="9" height="9" viewBox="0 0 9 9"><circle cx="3.2" cy="1.9" r="1.7" fill="#b87a3c"/><path d="M0.2 8.3C0.2 4.4 6.2 4.4 6.2 8.3Z" fill="#3f86d8"/><circle cx="5.4" cy="4.9" r="2.1" fill="#d8ecfb" stroke="#7da2c4" stroke-width="0.7"/><circle cx="5.4" cy="4.9" r="1" fill="#6db6ee"/><circle cx="8" cy="7.8" r="0.9" fill="#eea236"/></svg>
<div class="t k" style="left:349px;top:131.54px;font-size:6.5px;color:#000;transform:scaleX(0.905);transform-origin:left center;">Classification Review</div>
<div class="t k" style="left:423.3px;top:131.54px;font-size:6.5px;color:#000;transform:scaleX(0.905);transform-origin:left center;">5</div>
<div class="t k" style="left:456.5px;top:131.54px;font-size:6.5px;color:#000;transform:scaleX(0.905);transform-origin:left center;">Review</div>
<div class="t k" style="left:540px;top:131.54px;font-size:6.5px;color:#000;transform:scaleX(0.905);transform-origin:left center;">Batch</div>
<svg style="left:339.3px;top:141.1px" width="9" height="9" viewBox="0 0 9 9"><rect x="0.6" y="0.5" width="6" height="6.6" fill="#eef2f8" stroke="#b4c2d2" stroke-width="0.5"/><rect x="0.6" y="0.5" width="3.6" height="2.2" fill="#e0463e"/><path d="M3.4 3.6H6.4V2.4L8.4 4.4L6.4 6.4V5.2H3.4Z" fill="#3f8ee0"/><rect x="4.6" y="5.6" width="3.8" height="3" fill="#a9b6cc" stroke="#8a98b0" stroke-width="0.4"/></svg>
<div class="t k" style="left:349px;top:141.00px;font-size:6.5px;color:#000;transform:scaleX(0.905);transform-origin:left center;">Extract</div>
<div class="t k" style="left:423.3px;top:141.00px;font-size:6.5px;color:#000;transform:scaleX(0.905);transform-origin:left center;">6</div>
<div class="t k" style="left:456.5px;top:141.00px;font-size:6.5px;color:#000;transform:scaleX(0.905);transform-origin:left center;">Extract</div>
<div class="t k" style="left:540px;top:141.00px;font-size:6.5px;color:#000;transform:scaleX(0.905);transform-origin:left center;">Folder Level 2</div>
<svg style="left:339.3px;top:150.56px" width="9" height="9" viewBox="0 0 9 9"><circle cx="3.2" cy="1.9" r="1.7" fill="#b87a3c"/><path d="M0.2 8.3C0.2 4.4 6.2 4.4 6.2 8.3Z" fill="#3f86d8"/><circle cx="5.4" cy="4.9" r="2.1" fill="#d8ecfb" stroke="#7da2c4" stroke-width="0.7"/><circle cx="5.4" cy="4.9" r="1" fill="#6db6ee"/><circle cx="8" cy="7.8" r="0.9" fill="#eea236"/></svg>
<div class="t k" style="left:349px;top:150.46px;font-size:6.5px;color:#000;transform:scaleX(0.905);transform-origin:left center;">Data Review</div>
<div class="t k" style="left:423.3px;top:150.46px;font-size:6.5px;color:#000;transform:scaleX(0.905);transform-origin:left center;">7</div>
<div class="t k" style="left:456.5px;top:150.46px;font-size:6.5px;color:#000;transform:scaleX(0.905);transform-origin:left center;">Review</div>
<div class="t k" style="left:540px;top:150.46px;font-size:6.5px;color:#000;transform:scaleX(0.905);transform-origin:left center;">Batch</div>
<svg style="left:339.3px;top:160.01999999999998px" width="9" height="9" viewBox="0 0 9 9"><path d="M1.2 0.5H5.6L7.4 2.3V8.5H1.2Z" fill="#fafbfa" stroke="#b4bab0" stroke-width="0.55"/><rect x="3.6" y="4.4" width="3.8" height="4.1" fill="#56b040"/><path d="M4.6 6.5H6.4" stroke="#d9f0d0" stroke-width="0.8"/></svg>
<div class="t k" style="left:349px;top:159.92px;font-size:6.5px;color:#000;transform:scaleX(0.905);transform-origin:left center;">Export</div>
<div class="t k" style="left:423.3px;top:159.92px;font-size:6.5px;color:#000;transform:scaleX(0.905);transform-origin:left center;">8</div>
<div class="t k" style="left:456.5px;top:159.92px;font-size:6.5px;color:#000;transform:scaleX(0.905);transform-origin:left center;">Export</div>
<div class="t k" style="left:540px;top:159.92px;font-size:6.5px;color:#000;transform:scaleX(0.905);transform-origin:left center;">Folder Level 1</div>
<div class="b" style="left:336.8px;top:199.2px;width:258.9px;height:9.6px;background:#f0f0f0;"></div>
<div class="b" style="left:345.5px;top:200.2px;width:240.4px;height:7.7px;background:#cdcdcd;"></div>
<svg style="left:339.3px;top:202px" width="4" height="4.4" viewBox="0 0 4 4.4"><path d="M2.9 0.4L0.9 2.2L2.9 4" fill="none" stroke="#444" stroke-width="1.2"/></svg>
<svg style="left:589.7px;top:202px" width="4" height="4.4" viewBox="0 0 4 4.4"><path d="M1.1 0.4L3.1 2.2L1.1 4" fill="none" stroke="#444" stroke-width="1.2"/></svg>
<div class="b" style="left:336px;top:209.8px;width:259.6px;height:2px;background:#d8d8d8;"></div>
<div class="t k" style="left:336px;top:213.20px;font-size:6.5px;color:#000;width:259.6px;text-align:center;transform:scaleX(0.905);transform-origin:center center;">Step Properties</div>
<div class="b" style="left:336px;top:222.9px;width:259.6px;height:143.1px;background:#fff;border:0.8px solid #c2c2c2;"></div>
<div class="b" style="left:336px;top:366px;width:259.6px;height:3.2px;background:#d8d8d8;"></div>
<div class="b" style="left:335.8px;top:368.8px;width:259.8px;height:84.2px;background:#fff;border:0.9px solid #9a9a9a;border-right-color:#d0d0d0;border-bottom-color:#d0d0d0;"></div>
<div class="t k" style="left:599px;top:55.80px;font-size:6.5px;color:#000;width:197px;text-align:center;transform:scaleX(0.905);transform-origin:center center;">Validation Errors - No Issues Found</div>
<div class="b" style="left:599.1px;top:65.7px;width:197px;height:144px;background:#f0f0f0;border:0.9px solid #5c5c5c;"></div>
<div class="b" style="left:600px;top:66.6px;width:195.2px;height:10.5px;background:#fff;"></div>
<div class="b" style="left:668px;top:66.6px;width:0.6px;height:10.5px;background:#e2e2e2;"></div>
<div class="b" style="left:600px;top:76.8px;width:195.2px;height:0.6px;background:#c6c6c6;"></div>
<div class="t k" style="left:604.9px;top:67.70px;font-size:6.5px;color:#000;transform:scaleX(0.905);transform-origin:left center;">Property Name</div>
<div class="t k" style="left:672px;top:67.70px;font-size:6.5px;color:#000;transform:scaleX(0.905);transform-origin:left center;">Error Message</div>
<div class="b" style="left:598.7px;top:209.8px;width:197.3px;height:2px;background:#d8d8d8;"></div>
<div class="t k" style="left:598.7px;top:213.20px;font-size:6.5px;color:#000;width:197.3px;text-align:center;transform:scaleX(0.905);transform-origin:center center;">Activity Properties</div>
<div class="b" style="left:598.7px;top:222.9px;width:197.3px;height:143.1px;background:#fff;border:0.8px solid #c2c2c2;"></div>
<div class="b" style="left:598.7px;top:366px;width:197.3px;height:3.2px;background:#d8d8d8;"></div>
<div class="b" style="left:598.5px;top:368.8px;width:197.5px;height:84.2px;background:#fff;border:0.9px solid #9a9a9a;border-right-color:#d0d0d0;border-bottom-color:#d0d0d0;"></div>
<div class="b" style="left:114.6px;top:85.3px;width:12.4px;height:0.9px;background:repeating-linear-gradient(90deg,#a89a8a 0,#a89a8a 1.3px,transparent 1.3px,transparent 2.7px);"></div>
<div class="b" style="left:114.6px;top:89.6px;width:12.4px;height:0.8px;background:repeating-linear-gradient(90deg,#b4a898 0,#b4a898 1.3px,transparent 1.3px,transparent 2.7px);"></div>
<svg style="left:0;top:0;mix-blend-mode:multiply" width="800" height="458" viewBox="0 0 800 458"><defs><filter id="hb" x="-5%" y="-20%" width="110%" height="140%"><feGaussianBlur stdDeviation="0.35"/></filter></defs><g filter="url(#hb)" fill="#f2ee1c"><rect x="53.2" y="108.3" width="98.9" height="13.2" rx="1.5"/><path d="M166.6 83.4H335.3V121.1H213.6V109.5H324.3V93.9H166.6Z"/></g></svg>
<svg style="left:0;top:0" width="800" height="458" viewBox="0 0 800 458">
<defs><filter id="sh" x="-20%" y="-20%" width="150%" height="160%"><feDropShadow dx="1.3" dy="1.8" stdDeviation="1.05" flood-color="#000" flood-opacity="0.55"/></filter></defs>
<g filter="url(#sh)" fill="#f7941e">
<path d="M103 86.2H155.5V82L168.6 87.8L155.5 93.6V89.4H103Z"/>
<circle cx="103" cy="88" r="10.9"/>
<path d="M397 113.7H346V109.4L329.5 115.2L346 121V116.9H397Z"/>
<circle cx="397.8" cy="115.1" r="10.9"/>
<g transform="translate(113.2 117.3) rotate(44.3)"><path d="M0 0L13.5 -6.5V-1.6H66V1.6H13.5V6.5Z"/></g>
<circle cx="161" cy="164" r="10.9"/>
</g>
<g font-family="Liberation Sans, sans-serif" font-weight="bold" font-size="13.6" fill="#fff" text-anchor="middle" stroke="#fff" stroke-width="0.3">
<text x="103" y="92.8">2</text><text x="397.8" y="119.9">3</text><text x="161" y="168.8">1</text></g>
</svg>
<div class="b" style="left:1px;top:1px;width:798px;height:456px;border:1.6px solid #e2e4e6;border-top:none;"></div>
<div class="b" style="left:0px;top:0px;width:800px;height:458px;border:1px solid #515656;border-width:1.3px 0.8px 1px 1.2px;"></div>
</div></body></html>
